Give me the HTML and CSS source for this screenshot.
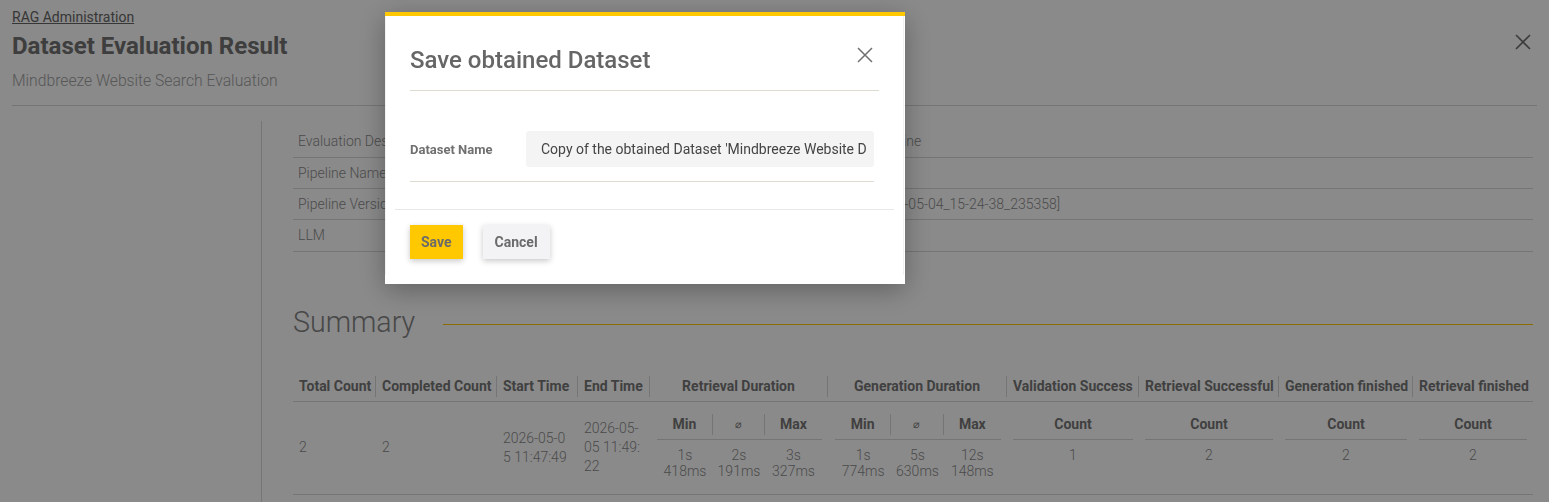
FILE: index.html
```
<!DOCTYPE html>
<html lang="en">
<head>
<meta charset="utf-8">
<title>Dataset Evaluation Result</title>
<link rel="stylesheet" href="styles.css">
</head>
<body>
<div class="page">
  <header class="page-header">
    <div class="titles">
      <a class="breadcrumb" href="#">RAG Administration</a>
      <h1 class="title">Dataset Evaluation Result</h1>
      <p class="subtitle">Mindbreeze Website Search Evaluation</p>
    </div>
    <button class="icon-btn page-close" aria-label="Close">
      <svg width="16" height="16" viewBox="0 0 16 16"><path d="M1 1 L15 15 M15 1 L1 15" stroke="#707070" stroke-width="1.6" fill="none"/></svg>
    </button>
  </header>
  <hr class="divider">
  <div class="layout">
    <aside class="sidebar"></aside>
    <main class="content">
      <table class="info">
        <tr><td class="info-label">Evaluation Description</td><td class="info-value">Evaluation of Mindbreeze website search engine</td></tr>
        <tr><td class="info-label">Pipeline Name</td><td class="info-value">Mindbreeze Website Search</td></tr>
        <tr><td class="info-label">Pipeline Version</td><td class="info-value">Mindbreeze Website Search Pipeline v1 [2026-05-04_15-24-38_235358]</td></tr>
        <tr class="info-last"><td class="info-label">LLM</td><td class="info-value">Mindbreeze LLM</td></tr>
      </table>
      <section class="summary">
        <div class="section-head">
          <h2 class="section-title">Summary</h2>
          <span class="section-rule"></span>
        </div>
        <table class="stats">
          <colgroup>
            <col class="c-total"><col class="c-completed"><col class="c-start"><col class="c-end">
            <col class="c-dur"><col class="c-dur2"><col class="c-val"><col class="c-rs"><col class="c-gf"><col class="c-rf">
          </colgroup>
          <thead>
            <tr>
              <th class="th-left"><span class="th-in">Total Count</span></th>
              <th class="th-left"><span class="th-in">Completed Count</span></th>
              <th class="th-left"><span class="th-in">Start Time</span></th>
              <th class="th-left"><span class="th-in">End Time</span></th>
              <th><span class="th-in">Retrieval Duration</span></th>
              <th><span class="th-in">Generation Duration</span></th>
              <th><span class="th-in">Validation Success</span></th>
              <th><span class="th-in">Retrieval Successful</span></th>
              <th><span class="th-in">Generation finished</span></th>
              <th><span class="th-in th-end">Retrieval finished</span></th>
            </tr>
          </thead>
          <tbody>
            <tr>
              <td>2</td>
              <td>2</td>
              <td class="td-start">2026-05-05 11:47:49</td>
              <td class="td-end">2026-05-05 11:49:22</td>
              <td class="td-sub td-dur">
                <table class="sub">
                  <colgroup><col class="s-min"><col class="s-avg"><col class="s-max"></colgroup>
                  <thead><tr><th><span class="th-in">Min</span></th><th><span class="th-in sym">⌀</span></th><th><span class="th-in th-end">Max</span></th></tr></thead>
                  <tbody><tr><td>1s 418ms</td><td>2s 191ms</td><td>3s 327ms</td></tr></tbody>
                </table>
              </td>
              <td class="td-sub td-dur">
                <table class="sub">
                  <colgroup><col class="s-min"><col class="s-avg"><col class="s-max"></colgroup>
                  <thead><tr><th><span class="th-in">Min</span></th><th><span class="th-in sym">⌀</span></th><th><span class="th-in th-end">Max</span></th></tr></thead>
                  <tbody><tr><td>1s 774ms</td><td>5s 630ms</td><td>12s 148ms</td></tr></tbody>
                </table>
              </td>
              <td class="td-sub">
                <table class="sub"><thead><tr><th><span class="th-in th-end">Count</span></th></tr></thead><tbody><tr><td>1</td></tr></tbody></table>
              </td>
              <td class="td-sub">
                <table class="sub"><thead><tr><th><span class="th-in th-end">Count</span></th></tr></thead><tbody><tr><td>2</td></tr></tbody></table>
              </td>
              <td class="td-sub">
                <table class="sub"><thead><tr><th><span class="th-in th-end">Count</span></th></tr></thead><tbody><tr><td>2</td></tr></tbody></table>
              </td>
              <td class="td-sub">
                <table class="sub"><thead><tr><th><span class="th-in th-end">Count</span></th></tr></thead><tbody><tr><td>2</td></tr></tbody></table>
              </td>
            </tr>
          </tbody>
        </table>
      </section>
    </main>
  </div>
</div>

<div class="overlay">
  <div class="dialog" role="dialog" aria-label="Save obtained Dataset">
    <div class="dialog-inner">
      <div class="dialog-header">
        <h2 class="dialog-title">Save obtained Dataset</h2>
        <button class="icon-btn dialog-close" aria-label="Close">
          <svg width="16" height="16" viewBox="0 0 16 16"><path d="M1 1 L15 15 M15 1 L1 15" stroke="#707070" stroke-width="1.5" fill="none"/></svg>
        </button>
      </div>
      <div class="dialog-form">
        <label class="field-label" for="dsname">Dataset Name</label>
        <input class="field-input" id="dsname" type="text" value="Copy of the obtained Dataset 'Mindbreeze Website Dataset'">
      </div>
      <div class="dialog-footer">
        <button class="btn btn-primary">Save</button>
        <button class="btn btn-secondary">Cancel</button>
      </div>
    </div>
  </div>
</div>
</body>
</html>
```
FILE: styles.css
```
* { box-sizing: border-box; }
html, body { margin: 0; height: 100%; overflow: hidden; }
body {
  font-family: Roboto, "Liberation Sans", Arial, sans-serif;
  background: #fff;
  color: #808080;
}

.page { padding: 7px 12px 0; }
.page-header {
  display: flex;
  justify-content: space-between;
  align-items: flex-start;
  padding-right: 6px;
}
.breadcrumb {
  display: inline-block;
  font-size: 14px;
  line-height: 19px;
  color: #666;
  text-decoration: underline;
}
.title {
  margin: 4px 0 0;
  font-size: 24px;
  line-height: 30px;
  font-weight: 700;
  color: #737373;
}
.subtitle {
  margin: 9px 0 0;
  font-size: 15.7px;
  line-height: 22px;
  font-weight: 300;
  color: #a2a2a2;
}
.icon-btn {
  display: block;
  width: 16px;
  height: 16px;
  padding: 0;
  border: 0;
  background: none;
}
.icon-btn svg { display: block; }
.page-close { margin-top: 27px; }

.divider {
  margin: 13px 0 0;
  border: 0;
  border-top: 1px solid #d8d8d8;
  height: 0;
}
.layout {
  display: flex;
  margin-top: 15px;
  min-height: 420px;
}
.sidebar {
  flex: none;
  width: 250px;
  border-right: 1px solid #d8d8d8;
}
.content {
  flex: 1;
  padding: 5px 4px 0 31px;
}

.info {
  width: 100%;
  border-collapse: collapse;
  font-size: 14px;
  font-weight: 300;
  color: #8c8c8c;
}
.info td {
  height: 31px;
  padding: 0 5px;
  border-bottom: 1px solid #d8d8d8;
  white-space: nowrap;
}
.info .info-last td { height: 32px; }
.info-label { width: 329px; }

.summary { margin-top: 53px; }
.section-head {
  display: flex;
  align-items: flex-start;
}
.section-title {
  margin: 0;
  font-size: 28.6px;
  line-height: 34px;
  font-weight: 300;
  color: #858585;
}
.section-rule {
  flex: 1;
  height: 1px;
  margin: 19px 0 0 28px;
  background: #ffc800;
}

.stats {
  margin-top: 33px;
  width: 1240px;
  table-layout: fixed;
  border-collapse: collapse;
}
.c-total { width: 83px; }
.c-completed { width: 121px; }
.c-start { width: 81px; }
.c-end { width: 72px; }
.c-dur { width: 178px; }
.c-dur2 { width: 179px; }
.c-val { width: 132px; }
.c-rs { width: 140px; }
.c-gf { width: 134px; }
.c-rf { width: 120px; }

.stats th {
  padding: 4px 0;
  border-bottom: 1px solid #d8d8d8;
  font-size: 14px;
  font-weight: 700;
  color: #777;
  white-space: nowrap;
  text-align: center;
}
.stats th.th-left { text-align: left; }
.th-in {
  display: block;
  padding: 2px 6px;
  line-height: 17px;
  border-right: 1px solid #d8d8d8;
}
.th-in.th-end { border-right: 0; }
.sym { font-size: 11px; font-weight: 400; }

.stats > tbody > tr > td {
  padding: 6px 6px;
  border-bottom: 1px solid #d8d8d8;
  font-size: 14px;
  font-weight: 300;
  color: #8c8c8c;
  line-height: 19px;
  vertical-align: middle;
  word-break: break-all;
}
.stats > tbody > tr > td.td-start { padding-right: 9px; }
.stats > tbody > tr > td.td-end { padding-right: 8px; }
.stats > tbody > tr > td.td-sub {
  padding: 6px 6px 6px 6px;
  vertical-align: top;
  word-break: normal;
}
.stats > tbody > tr > td.td-dur { padding-left: 7px; }

.sub {
  width: 100%;
  table-layout: fixed;
  border-collapse: collapse;
}
.stats .sub th { padding: 6px 0 4px; }
.s-min { width: 56px; }
.s-avg { width: 52px; }
.s-max { width: 57px; }
.sub td {
  padding: 7px 4px 9px;
  text-align: center;
  vertical-align: top;
  font-size: 14px;
  font-weight: 300;
  line-height: 16px;
  color: #8c8c8c;
}

/* Modal */
.overlay {
  position: fixed;
  inset: 0;
  background: rgba(0, 0, 0, 0.46);
}
.dialog {
  position: absolute;
  left: 385px;
  top: 12px;
  width: 520px;
  background: #fff;
  border-top: 4px solid #ffc800;
  box-shadow: 0 6px 26px rgba(0, 0, 0, 0.3);
  padding-bottom: 9px;
}
.dialog-inner {
  border-left: 1px solid #f1f1f1;
  border-right: 1px solid #f1f1f1;
  margin-right: 1px;
  padding-bottom: 16px;
}
.dialog-header {
  display: flex;
  justify-content: space-between;
  align-items: flex-start;
  margin: 0 24px;
  padding: 30px 0 16px;
  border-bottom: 1px solid #dedbd0;
}
.dialog-title {
  margin: 0;
  font-size: 24px;
  line-height: 28px;
  font-weight: 500;
  color: #666;
}
.dialog-close { margin: 1px 6px 0 0; }

.dialog-form {
  display: flex;
  align-items: center;
  margin: 0 29px 0 24px;
  padding: 40px 0 14px;
  border-bottom: 1px solid #dedbd0;
}
.field-label {
  flex: none;
  width: 116px;
  font-size: 13px;
  font-weight: 700;
  color: #707070;
}
.field-input {
  flex: 1;
  min-width: 0;
  height: 36px;
  border: 0;
  border-radius: 3px;
  background: #f4f4f4;
  padding: 0 8px 0 15px;
  font-family: Roboto, "Liberation Sans", Arial, sans-serif;
  font-size: 14px;
  color: #444;
  outline: none;
}

.dialog-footer {
  display: flex;
  gap: 20px;
  margin: 27px 9px 0;
  padding: 15px 15px 0;
  border-top: 1px solid #e8e8e8;
}
.btn {
  height: 34px;
  padding: 0 12px;
  border: 0;
  border-radius: 0;
  font-family: Roboto, "Liberation Sans", Arial, sans-serif;
  font-size: 14px;
  font-weight: 700;
  color: #6b6b6b;
  box-shadow: 0 2px 6px rgba(0, 0, 0, 0.22);
}
.btn-primary { background: #ffc800; padding: 0 11px; }
.btn-secondary { background: #f3f3f5; }
```
